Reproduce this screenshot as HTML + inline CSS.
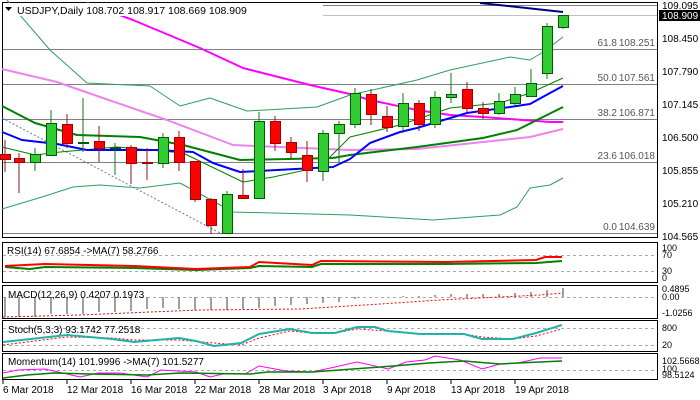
<!DOCTYPE html><html><head><style>body{margin:0;background:#fff}svg{display:block;font-family:"Liberation Sans",sans-serif}</style></head><body>
<svg width="700" height="400" viewBox="0 0 700 400" xmlns="http://www.w3.org/2000/svg">
<rect width="700" height="400" fill="#fff"/>
<g fill="none" stroke="#000" stroke-width="1">
<rect x="2.5" y="2.5" width="655" height="235"/>
<rect x="2.5" y="242.5" width="655" height="40"/>
<rect x="2.5" y="285.5" width="655" height="33"/>
<rect x="2.5" y="320.5" width="655" height="31"/>
<rect x="2.5" y="353.5" width="655" height="26"/>
</g>
<g stroke="#808080" stroke-width="1">
<line x1="3" y1="5.5" x2="657" y2="5.5"/>
<line x1="3" y1="49.5" x2="657" y2="49.5"/>
<line x1="3" y1="84.5" x2="657" y2="84.5"/>
<line x1="3" y1="119.5" x2="657" y2="119.5"/>
<line x1="3" y1="162.5" x2="657" y2="162.5"/>
<line x1="3" y1="233.5" x2="657" y2="233.5"/>
</g>
<line x1="3" y1="15.5" x2="657" y2="15.5" stroke="#c0c0c0"/>
<g font-size="10" fill="#555" text-anchor="end">
<text x="617" y="46">61.8</text><text x="655" y="46">108.251</text>
<text x="617" y="81">50.0</text><text x="655" y="81">107.561</text>
<text x="617" y="116">38.2</text><text x="655" y="116">106.871</text>
<text x="617" y="159">23.6</text><text x="655" y="159">106.018</text>
<text x="617" y="230">0.0</text><text x="655" y="230">104.639</text>
</g>
<line x1="2" y1="118" x2="222" y2="234" stroke="#6a7a8a" stroke-dasharray="2,2"/>
<g fill="none" stroke-linejoin="round">
<polyline stroke="#2e9e5e" stroke-width="1" points="7,0 50,50 87,83 150,86 180,106 210,98 247,111 317,107 350,95 417,80 450,70 510,57 530,60 543,52 563,37"/>
<polyline stroke="#2e9e5e" stroke-width="1" points="2,209 42,197 73,187 100,185 140,188 180,183 233,212 350,215 433,220 500,215 517,207 530,188 550,185 563,178"/>
<polyline stroke="#ee82ee" stroke-width="2" points="2,69 57,82 100,97 167,120 233,145 350,150 417,149 483,142 530,137 563,129"/>
<polyline stroke="#ff00ff" stroke-width="2" points="87,3 133,20 200,48 243,68 310,85 350,94 370,100 417,110 450,115 483,117 523,120 550,122 563,122"/>
<polyline stroke="#000080" stroke-width="2" points="480,3 563,12"/>
<polyline stroke="#008000" stroke-width="1" points="2,147 35,155 60,152 117,147 183,153 243,182 273,177 320,167 350,137 400,125 450,108 500,103 530,93 563,78"/>
<polyline stroke="#008000" stroke-width="2" points="2,106 35,123 77,135 140,137 183,145 240,160 333,158 350,155 417,147 483,138 517,130 537,120 563,107"/>
<polyline stroke="#0000ff" stroke-width="2" points="2,132 22,140 57,144 87,150 157,150 193,152 213,163 240,172 277,170 333,167 350,159 370,143 400,132 417,128 467,113 510,107 530,104 550,93 563,86"/>
</g>
<g stroke-width="1">
<g stroke="#8b1a1a">
<line x1="5" y1="140" x2="5" y2="172"/><line x1="19" y1="153" x2="19" y2="193"/><line x1="67" y1="114" x2="67" y2="148"/><line x1="99" y1="126" x2="99" y2="162"/><line x1="131" y1="145" x2="131" y2="184"/><line x1="147" y1="148" x2="147" y2="180"/><line x1="179" y1="131" x2="179" y2="171"/><line x1="195" y1="161" x2="195" y2="202"/><line x1="211" y1="198" x2="211" y2="234"/><line x1="243" y1="169" x2="243" y2="199"/><line x1="275" y1="116" x2="275" y2="151"/><line x1="291" y1="137" x2="291" y2="159"/><line x1="307" y1="141" x2="307" y2="182"/><line x1="371" y1="89" x2="371" y2="125"/><line x1="387" y1="106" x2="387" y2="132"/><line x1="419" y1="100" x2="419" y2="131"/><line x1="467" y1="82" x2="467" y2="112"/><line x1="483" y1="102" x2="483" y2="119"/>
</g>
<g stroke="#1a6e1a">
<line x1="35" y1="148" x2="35" y2="171"/><line x1="51" y1="110" x2="51" y2="156"/><line x1="83" y1="98" x2="83" y2="152"/><line x1="115" y1="143" x2="115" y2="175"/><line x1="163" y1="133" x2="163" y2="168"/><line x1="227" y1="191" x2="227" y2="234"/><line x1="259" y1="112" x2="259" y2="199"/><line x1="323" y1="130" x2="323" y2="181"/><line x1="339" y1="121" x2="339" y2="164"/><line x1="355" y1="88" x2="355" y2="128"/><line x1="403" y1="93" x2="403" y2="133"/><line x1="435" y1="91" x2="435" y2="128"/><line x1="451" y1="73" x2="451" y2="103"/><line x1="499" y1="93" x2="499" y2="115"/><line x1="515" y1="87" x2="515" y2="105"/><line x1="531" y1="69" x2="531" y2="97"/><line x1="547" y1="23" x2="547" y2="79"/><line x1="563" y1="15" x2="563" y2="29"/>
</g>
<g fill="#ff0000" stroke="#a00000">
<rect x="0.5" y="154.5" width="10" height="5"/><rect x="14.5" y="158.5" width="10" height="4"/><rect x="62.5" y="124.5" width="10" height="19"/><rect x="94.5" y="141.5" width="10" height="7"/><rect x="126.5" y="147.5" width="10" height="16"/><rect x="142.5" y="162.5" width="10" height="1"/><rect x="174.5" y="137.5" width="10" height="25"/><rect x="190.5" y="161.5" width="10" height="38"/><rect x="206.5" y="199.5" width="10" height="26"/><rect x="238.5" y="195.5" width="10" height="3"/><rect x="270.5" y="121.5" width="10" height="22"/><rect x="286.5" y="142.5" width="10" height="10"/><rect x="302.5" y="155.5" width="10" height="15"/><rect x="366.5" y="94.5" width="10" height="20"/><rect x="382.5" y="116.5" width="10" height="11"/><rect x="414.5" y="103.5" width="10" height="21"/><rect x="462.5" y="89.5" width="10" height="19"/><rect x="478.5" y="108.5" width="10" height="5"/>
</g>
<g fill="#32cd32" stroke="#005a00">
<rect x="30.5" y="154.5" width="10" height="8"/><rect x="46.5" y="123.5" width="10" height="32"/><rect x="78.5" y="142.5" width="10" height="1"/><rect x="110.5" y="147.5" width="10" height="1"/><rect x="158.5" y="137.5" width="10" height="26"/><rect x="222.5" y="194.5" width="10" height="39"/><rect x="254.5" y="121.5" width="10" height="77"/><rect x="318.5" y="133.5" width="10" height="38"/><rect x="334.5" y="124.5" width="10" height="9"/><rect x="350.5" y="93.5" width="10" height="31"/><rect x="398.5" y="103.5" width="10" height="23"/><rect x="430.5" y="97.5" width="10" height="27"/><rect x="446.5" y="94.5" width="10" height="3"/><rect x="494.5" y="101.5" width="10" height="12"/><rect x="510.5" y="94.5" width="10" height="9"/><rect x="526.5" y="83.5" width="10" height="13"/><rect x="542.5" y="26.5" width="10" height="47"/><rect x="558.5" y="15.5" width="10" height="12"/>
</g>
</g>
<rect x="3" y="3" width="320" height="13" fill="#fff"/>
<polygon points="5,7 12,7 8.5,11" fill="#000"/>
<text x="17" y="14" font-size="10.5" fill="#000">USDJPY,Daily  108.702 108.917 108.669 108.909</text>
<g font-size="10" fill="#000">
<text x="662" y="9">109.095</text>
<text x="662" y="42">108.450</text>
<text x="662" y="75">107.790</text>
<text x="662" y="108">107.145</text>
<text x="662" y="141">106.500</text>
<text x="662" y="174">105.855</text>
<text x="662" y="207">105.210</text>
<text x="662" y="240">104.565</text>
</g>
<rect x="659" y="10" width="41" height="11" fill="#000"/>
<text x="662" y="19" font-size="10" fill="#fff">108.909</text>
<g stroke="#aaa" stroke-dasharray="3,3"><line x1="3" y1="255.5" x2="657" y2="255.5"/><line x1="3" y1="271.5" x2="657" y2="271.5"/></g>
<polyline fill="none" stroke="#008000" stroke-width="2" points="5,267 30,269 45,267 134,268 196,270 250,268 259,266 312,267 321,264 446,264 536,263 562,261"/>
<polyline fill="none" stroke="#ff0000" stroke-width="2" points="5,266 45,264 134,266 196,269 250,267 259,262 312,265 321,261 446,262 536,260 545,257 562,257"/>
<text x="7" y="254" font-size="10">RSI(14) 67.6854  -&gt;MA(7) 58.2766</text>
<g font-size="9"><text x="662" y="251">100</text><text x="662" y="258">70</text><text x="662" y="274">30</text><text x="662" y="281">0</text></g>
<line x1="3" y1="297.5" x2="657" y2="297.5" stroke="#aaa" stroke-dasharray="3,3"/>
<g stroke="#808080" stroke-width="1.5">
<line x1="5" y1="297" x2="5" y2="317"/><line x1="19" y1="297" x2="19" y2="317"/><line x1="35" y1="297" x2="35" y2="317"/><line x1="51" y1="297" x2="51" y2="314"/><line x1="67" y1="297" x2="67" y2="314"/><line x1="83" y1="297" x2="83" y2="314"/><line x1="99" y1="297" x2="99" y2="312"/><line x1="115" y1="297" x2="115" y2="312"/><line x1="131" y1="297" x2="131" y2="311"/><line x1="147" y1="297" x2="147" y2="309"/><line x1="163" y1="297" x2="163" y2="308"/><line x1="179" y1="297" x2="179" y2="309"/><line x1="195" y1="297" x2="195" y2="310"/><line x1="211" y1="297" x2="211" y2="310"/><line x1="227" y1="297" x2="227" y2="310"/><line x1="243" y1="297" x2="243" y2="309"/><line x1="259" y1="297" x2="259" y2="308"/><line x1="275" y1="297" x2="275" y2="306"/><line x1="291" y1="297" x2="291" y2="305"/><line x1="307" y1="297" x2="307" y2="304"/><line x1="323" y1="297" x2="323" y2="303"/><line x1="339" y1="297" x2="339" y2="302"/><line x1="355" y1="297" x2="355" y2="299"/><line x1="403" y1="297" x2="403" y2="296"/><line x1="419" y1="297" x2="419" y2="296"/><line x1="435" y1="297" x2="435" y2="295"/><line x1="451" y1="297" x2="451" y2="294"/><line x1="467" y1="297" x2="467" y2="294"/><line x1="483" y1="297" x2="483" y2="294"/><line x1="499" y1="297" x2="499" y2="294"/><line x1="515" y1="297" x2="515" y2="293"/><line x1="531" y1="297" x2="531" y2="292"/><line x1="547" y1="297" x2="547" y2="290"/><line x1="563" y1="297" x2="563" y2="288"/>
</g>
<polyline fill="none" stroke="#ff0000" stroke-dasharray="2,2" points="3,317 80,315 150,312 200,310 300,309 380,304 440,300 500,297 540,295 563,293"/>
<text x="8" y="298" font-size="10">MACD(12,26,9) 0.4207 0.1973</text>
<g font-size="9"><text x="662" y="292">0.4895</text><text x="662" y="300">0.00</text><text x="662" y="316">-1.0256</text></g>
<g stroke="#aaa" stroke-dasharray="3,3"><line x1="3" y1="328.5" x2="657" y2="328.5"/><line x1="3" y1="345.5" x2="657" y2="345.5"/></g>
<polyline fill="none" stroke="#ff0000" stroke-dasharray="2,2" points="3,345 67,337 112,338 134,340 179,340 214,343 241,345 259,338 290,331 312,333 335,333 357,329 388,331 420,334 464,334 482,337 513,339 536,336 562,329"/>
<polyline fill="none" stroke="#20b2aa" stroke-width="2" points="3,342 67,335 112,339 134,342 179,338 196,341 214,346 241,343 259,334 290,329 312,333 335,333 357,327 375,327 388,331 420,334 464,334 482,339 513,339 536,333 562,325"/>
<text x="8" y="333" font-size="10">Stoch(5,3,3) 93.1742 77.2518</text>
<g font-size="9"><text x="662" y="331">800</text><text x="662" y="348">20</text></g>
<line x1="3" y1="370.5" x2="657" y2="370.5" stroke="#aaa" stroke-dasharray="3,3"/>
<polyline fill="none" stroke="#ff00ff" points="3,373 18,370 45,369 67,374 80,377 98,373 120,373 147,377 161,370 196,372 210,377 223,374 245,374 259,366 286,371 312,372 335,367 357,362 388,369 406,362 425,360 435,356 460,360 482,369 500,364 518,363 540,358 562,358"/>
<polyline fill="none" stroke="#008000" stroke-width="1.5" points="3,378 27,375 54,373 90,374 147,375 180,373 250,374 268,372 312,372 393,366 429,363 464,361 500,364 518,363 562,361"/>
<text x="8" y="365" font-size="10">Momentum(14) 101.9996  -&gt;MA(7) 101.5277</text>
<g font-size="9"><text x="662" y="364">102.5668</text><text x="662" y="372">100</text><text x="662" y="378">98.5124</text></g>
<g stroke="#000"><line x1="3" y1="380" x2="3" y2="384"/><line x1="67" y1="380" x2="67" y2="384"/><line x1="131" y1="380" x2="131" y2="384"/><line x1="195" y1="380" x2="195" y2="384"/><line x1="259" y1="380" x2="259" y2="384"/><line x1="323" y1="380" x2="323" y2="384"/><line x1="387" y1="380" x2="387" y2="384"/><line x1="451" y1="380" x2="451" y2="384"/><line x1="515" y1="380" x2="515" y2="384"/></g>
<g font-size="10" fill="#000">
<text x="3" y="393">6 Mar 2018</text><text x="67" y="393">12 Mar 2018</text><text x="131" y="393">16 Mar 2018</text><text x="195" y="393">22 Mar 2018</text><text x="259" y="393">28 Mar 2018</text><text x="323" y="393">3 Apr 2018</text><text x="387" y="393">9 Apr 2018</text><text x="451" y="393">13 Apr 2018</text><text x="515" y="393">19 Apr 2018</text>
</g>
</svg>
</body></html>
